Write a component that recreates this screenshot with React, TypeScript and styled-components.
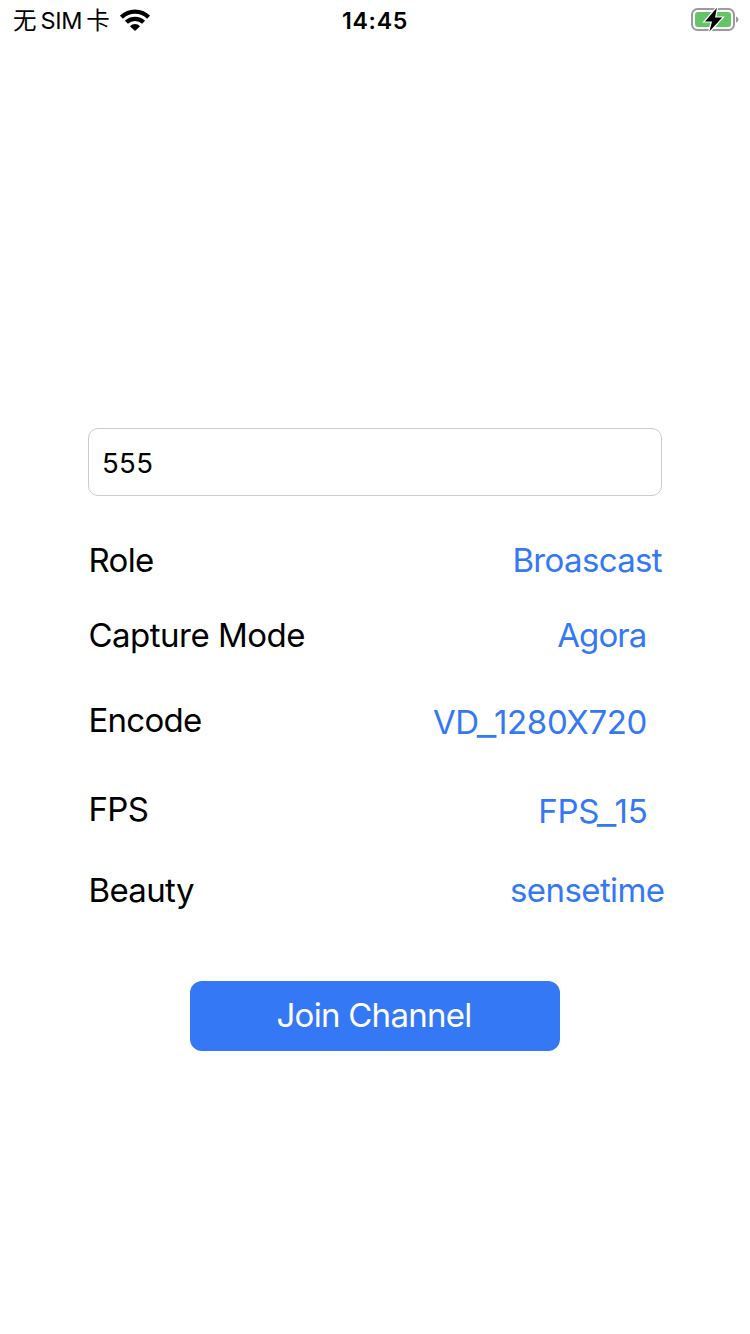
import React from "react";
import styled, { createGlobalStyle } from "styled-components";

const GlobalStyle = createGlobalStyle`
  * { box-sizing: border-box; }
  body { margin: 0; background: #fff; }
`;

const Screen = styled.div`
  width: 750px;
  height: 1334px;
  display: flex;
  flex-direction: column;
  overflow: hidden;
  background: #fff;
  color: #000;
  font-family: Inter, "Noto Sans CJK SC", sans-serif;
`;

const StatusBar = styled.header`
  height: 40px;
  display: grid;
  grid-template-columns: 1fr auto 1fr;
  align-items: center;
  padding: 0 11px 0 13px;
`;

const Carrier = styled.div`
  display: flex;
  align-items: center;
  gap: 4px;
  font-size: 23.5px;
  line-height: 38px;
  white-space: nowrap;
`;

const CarrierText = styled.span<{ $tracking?: number }>`
  padding-top: 2px;
  letter-spacing: ${(p) => p.$tracking ?? 0}px;
`;

const WifiIcon = styled.svg`
  display: block;
  margin-left: 6px;
`;

const Clock = styled.time`
  padding: 2px 2px 0 0;
  font-size: 23.2px;
  font-weight: 600;
  line-height: 38px;
  letter-spacing: 0.7px;
`;

const BatteryIcon = styled.svg`
  display: block;
  justify-self: end;
`;

const Form = styled.main`
  display: flex;
  flex-direction: column;
  padding: 388px 88px 0;
`;

const ChannelInput = styled.input`
  width: 574px;
  height: 68px;
  padding: 1px 13px 0;
  border: 1px solid #cccccc;
  border-radius: 10px;
  outline: none;
  background: #fff;
  color: #000;
  font-family: inherit;
  font-size: 27.5px;
  letter-spacing: 0.4px;
`;

const Row = styled.div<{ $gap: number }>`
  display: flex;
  justify-content: space-between;
  align-items: flex-start;
  height: 42px;
  margin-top: ${(p) => p.$gap}px;
  font-size: 33px;
  line-height: 42px;
  white-space: nowrap;
`;

const Label = styled.span<{ $tracking: number }>`
  padding-left: 0.5px;
  letter-spacing: ${(p) => p.$tracking}px;
`;

const Value = styled.button<{ $tracking: number; $inset: number; $drop: number }>`
  margin: ${(p) => p.$drop}px ${(p) => p.$inset}px 0 0;
  padding: 0;
  border: 0;
  background: none;
  color: #3478f6;
  font: inherit;
  letter-spacing: ${(p) => p.$tracking}px;
`;

const Underscore = styled.span`
  display: inline-block;
  margin: 0 0.8px 0 -0.3px;
  transform: translateY(1px) scaleX(1.3);
`;

const JoinButton = styled.button`
  align-self: center;
  width: 370px;
  height: 70px;
  margin-top: 70px;
  padding: 0 2px 2px 0;
  border: 0;
  border-radius: 12px;
  background: #3478f6;
  color: #fff;
  font-family: inherit;
  font-size: 33px;
  line-height: 68px;
  letter-spacing: -0.73px;
`;

const settings = [
  { label: "Role", value: "Broascast", gap: 43, inset: 0, drop: 0, lt: -0.7, vt: -0.65 },
  { label: "Capture Mode", value: "Agora", gap: 33, inset: 15.5, drop: 0, lt: -0.52, vt: -0.9 },
  { label: "Encode", value: "VD_1280X720", gap: 43, inset: 15, drop: 2, lt: -0.75, vt: -0.35 },
  { label: "FPS", value: "FPS_15", gap: 47, inset: 14.5, drop: 2, lt: -0.7, vt: -0.25 },
  { label: "Beauty", value: "sensetime", gap: 39, inset: -2.5, drop: 0, lt: -0.65, vt: -0.58 },
];

function ValueText({ text }: { text: string }) {
  const [head, tail] = text.split("_");
  if (tail === undefined) return <>{head}</>;
  return (
    <>
      {head}
      <Underscore>_</Underscore>
      {tail}
    </>
  );
}

export default function App() {
  return (
    <>
      <GlobalStyle />
      <Screen>
        <StatusBar>
          <Carrier>
            <CarrierText>无</CarrierText>
            <CarrierText $tracking={-0.3}>SIM</CarrierText>
            <CarrierText>卡</CarrierText>
            <WifiIcon width="30" height="22" viewBox="0 0 30 22" fill="none" stroke="#000">
              <path d="M1.4 8.1a19.4 19.4 0 0 1 27.2 0" strokeWidth="4.3" />
              <path d="M6.4 13.3a12.3 12.3 0 0 1 17.2 0" strokeWidth="4.3" />
              <path d="M15 22l-5-4.8a7 7 0 0 1 10 0z" fill="#000" stroke="none" />
            </WifiIcon>
          </Carrier>
          <Clock>14:45</Clock>
          <BatteryIcon width="48" height="28" viewBox="0 0 48 28">
            <rect x="1" y="3" width="42" height="21" rx="5.5" fill="#fff" stroke="#9b9b9b" strokeWidth="2" />
            <rect x="4" y="6" width="36" height="15" rx="3" fill="#65c466" />
            <path d="M45 10.5c3.2 1.2 3.2 5 0 6.2z" fill="#9b9b9b" />
            <path
              d="M25.9 1.7L14 15.4h7L18.4 25.6 31.2 11.6h-7.1z"
              fill="#000"
              stroke="#fff"
              strokeWidth="2.4"
              paintOrder="stroke"
            />
          </BatteryIcon>
        </StatusBar>
        <Form>
          <ChannelInput defaultValue="555" aria-label="Channel" />
          {settings.map((s) => (
            <Row key={s.label} $gap={s.gap}>
              <Label $tracking={s.lt}>{s.label}</Label>
              <Value type="button" $tracking={s.vt} $inset={s.inset} $drop={s.drop}>
                <ValueText text={s.value} />
              </Value>
            </Row>
          ))}
          <JoinButton type="button">Join Channel</JoinButton>
        </Form>
      </Screen>
    </>
  );
}
